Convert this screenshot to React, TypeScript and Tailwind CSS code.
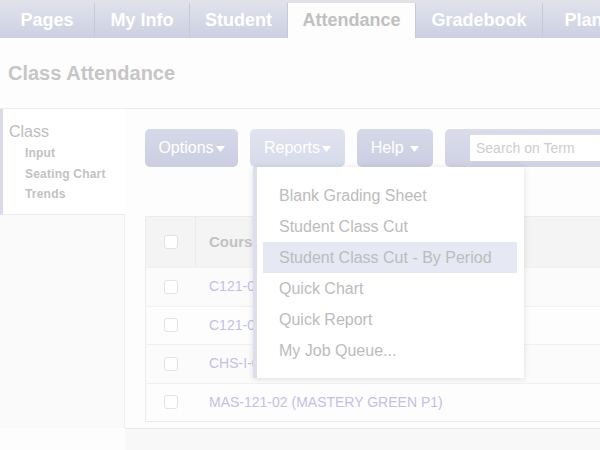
import { useState } from 'react'

const tabs = [
  { label: 'Pages', width: 'w-[95px]' },
  { label: 'My Info', width: 'w-[95px]' },
  { label: 'Student', width: 'w-[98px]' },
  { label: 'Attendance', width: 'w-[128px]', active: true },
  { label: 'Gradebook', width: 'w-[127px]' },
  { label: 'Planner', width: 'w-[110px]' },
]

const reportItems = [
  'Blank Grading Sheet',
  'Student Class Cut',
  'Student Class Cut - By Period',
  'Quick Chart',
  'Quick Report',
  'My Job Queue...',
]

const courses = [
  'C121-01 (CHEMISTRY HONORS P2)',
  'C121-03 (CHEMISTRY HONORS P4)',
  'CHS-I-01 (CHEMISTRY P6)',
  'MAS-121-02 (MASTERY GREEN P1)',
]

function Checkbox() {
  return <div className="h-[14px] w-[14px] rounded-[3px] border border-[#e2e2e2] bg-white" />
}

function Caret() {
  return (
    <svg width="9" height="6" viewBox="0 0 9 6" className="ml-[2px] mt-[2px]">
      <path d="M0 0 L9 0 L4.5 6 Z" fill="#ffffff" />
    </svg>
  )
}

export default function App() {
  const [hovered] = useState(2)

  return (
    <div className="flex h-[450px] w-[600px] flex-col overflow-hidden bg-[#fdfdfd] font-['Liberation_Sans',Arial,sans-serif]">
      {/* Tab bar */}
      <div className="flex h-[38px] shrink-0 bg-[#e2e2e6] pt-[3px]">
        {tabs.map((tab) => (
          <div
            key={tab.label}
            className={`${tab.width} flex shrink-0 items-center justify-center border-r border-[#c6c9d8] text-[18px] font-bold ${
              tab.active
                ? 'bg-[#fdfdfd] text-[#c0c0c0]'
                : 'bg-gradient-to-b from-[#dfe1ec] to-[#cdd0e1] text-white'
            }`}
          >
            {tab.label}
          </div>
        ))}
      </div>

      {/* Page title */}
      <div className="flex h-[71px] shrink-0 items-center border-b border-[#ececec] pl-[8px]">
        <h1 className="text-[20px] font-bold text-[#c6c6c6]">Class Attendance</h1>
      </div>

      <div className="flex min-h-0 flex-1">
        {/* Sidebar */}
        <div className="flex w-[125px] shrink-0 flex-col">
          <div className="h-[106px] border-b border-l-[3px] border-[#ececec] border-l-[#d8daeb] bg-white pl-[6px] pt-[13px]">
            <div className="text-[16px] leading-[20px] text-[#bdbdbd]">Class</div>
            <div className="pl-[16px] pt-[1px] text-[12px] font-bold leading-[20.5px] tracking-[0.2px] text-[#c2c2c2]">
              <div>Input</div>
              <div>Seating Chart</div>
              <div>Trends</div>
            </div>
          </div>
          <div className="h-[213px] border-r border-[#f0f0f0] bg-[#fafafa]" />
        </div>

        {/* Main */}
        <div className="flex min-w-0 flex-1 flex-col">
          <div className="relative flex gap-[12px] pl-[20px] pt-[20px]">
            <div className="flex h-[38px] w-[93px] items-center justify-center rounded-[5px] bg-gradient-to-b from-[#d6d9e9] to-[#cbcee1] text-[16px] text-white">
              Options<Caret />
            </div>
            <div className="flex h-[38px] w-[95px] items-center justify-center rounded-[5px] bg-gradient-to-b from-[#e1e3f0] to-[#d7dae9] text-[16px] text-white">
              Reports<Caret />
            </div>
            <div className="flex h-[38px] w-[76px] items-center justify-center rounded-[5px] bg-gradient-to-b from-[#d6d9e9] to-[#cbcee1] text-[16px] text-white">
              Help&nbsp;<Caret />
            </div>
            <div className="flex h-[38px] flex-1 items-center rounded-l-[5px] bg-gradient-to-b from-[#dadcea] to-[#cfd2e3] pl-[25px]">
              <div className="flex h-[26px] flex-1 items-center bg-white pl-[6px] text-[14px] text-[#cdcdcd]">
                Search on Term
              </div>
            </div>

            {/* Reports dropdown */}
            <div className="absolute left-[128px] top-[58px] z-10 w-[271px] border-l-[4px] border-[#dcdeec] bg-white pb-[12px] pt-[13px] shadow-[0_1px_6px_rgba(0,0,0,0.12)]">
              {reportItems.map((item, i) => (
                <div
                  key={item}
                  className={`mx-[6px] mr-[7px] flex h-[31px] items-center pl-[16px] text-[16px] text-[#bcbcbc] ${
                    i === hovered ? 'bg-[#e6e8f4]' : ''
                  }`}
                >
                  {item}
                </div>
              ))}
            </div>
          </div>

          {/* Course table */}
          <div className="ml-[20px] mt-[49px] flex h-[206px] flex-col border-y border-l border-[#ececec] bg-white">
            <div className="flex h-[50px] shrink-0 bg-[#f4f4f4]">
              <div className="flex w-[50px] items-center justify-center border-r border-[#ebebeb]">
                <Checkbox />
              </div>
              <div className="flex items-center pl-[13px] text-[15px] font-bold text-[#c2c2c2]">Course</div>
            </div>
            {courses.map((course, i) => (
              <div
                key={course}
                className={`flex h-[38.5px] items-center border-t border-[#f1f1f1] ${
                  i % 2 === 0 ? 'bg-[#fbfbfb]' : 'bg-[#fdfdfd]'
                }`}
              >
                <div className="flex w-[50px] items-center justify-center">
                  <Checkbox />
                </div>
                <div className="pl-[13px] text-[14px] text-[#c3c0e6]">{course}</div>
              </div>
            ))}
          </div>
          <div className="mt-[6px] h-[1px] bg-[#ececec]" />
          <div className="flex-1 bg-[#f8f8f8]" />
        </div>
      </div>
    </div>
  )
}
